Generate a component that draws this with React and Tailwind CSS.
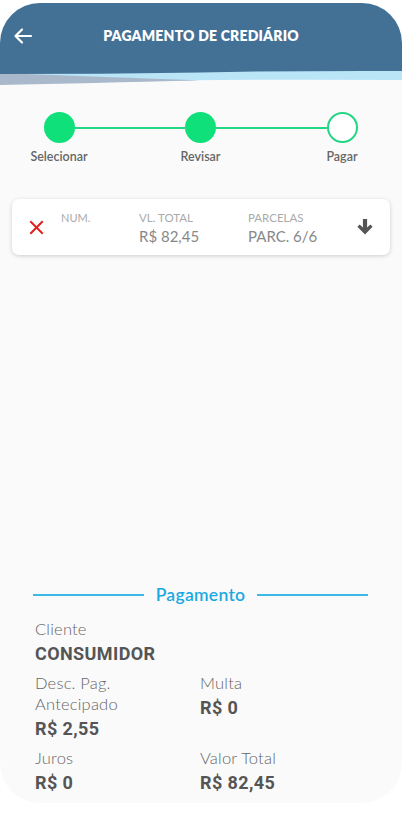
import React from 'react';

const font = { fontFamily: 'Lato, "Open Sans", sans-serif' };

const Header = () => (
  <div className="bg-[#437196]">
    <div className="flex items-start h-[61px] pt-[24px]">
      <div className="w-[50px] pl-[13px]">
        <svg width="20" height="18" viewBox="0 0 20 18" fill="none" stroke="white" strokeWidth="2.2" strokeLinecap="round" strokeLinejoin="round">
          <path d="M18 9H3" />
          <path d="M9 2.5L2.5 9L9 15.5" />
        </svg>
      </div>
      <h1 className="flex-1 text-center text-white text-[14px] leading-[18px] font-extrabold tracking-[0.2px]">
        PAGAMENTO DE CREDIÁRIO
      </h1>
      <div className="w-[50px]" />
    </div>
  </div>
);

const Wave = () => (
  <svg className="block bg-[#fafafa]" width="402" height="24" viewBox="0 0 402 24">
    <path d="M0 8 L402 6 L402 16 Q260 15 120 17 L0 18 Z" fill="#b9e5f7" />
    <path d="M0 9 L0 21 Q90 19 200 16.5 Q110 13 0 9 Z" fill="#a9b9cb" />
    <path d="M0 0 H402 V7 Q300 6.5 200 8.5 Q100 10 0 10 Z" fill="#437196" />
  </svg>
);

const Circle = ({ done }) => (
  <div
    className={
      done
        ? 'w-[31px] h-[31px] rounded-full bg-[#0fe07a] shrink-0'
        : 'w-[31px] h-[31px] rounded-full bg-white border-2 border-[#22d683] shrink-0'
    }
  />
);

const Stepper = () => (
  <div className="mt-[24px]">
    <div className="flex items-center pl-[43.5px] pr-[44.5px]">
      <Circle done />
      <div className="flex-1 h-[2px] bg-[#22d683]" />
      <Circle done />
      <div className="flex-1 h-[2px] bg-[#22d683]" />
      <Circle />
    </div>
    <div className="flex justify-between pl-[19px] pr-[20px] mt-[6px] text-[12.5px] leading-[16px] font-semibold text-[#666]">
      <span className="w-[80px] text-center">Selecionar</span>
      <span className="w-[80px] text-center">Revisar</span>
      <span className="w-[80px] text-center">Pagar</span>
    </div>
  </div>
);

const Card = () => (
  <div className="mx-[12px] mt-[34px] h-[56px] bg-white rounded-[7px] shadow-[0_1px_4px_rgba(0,0,0,0.18)] flex items-center">
    <div className="w-[49px] flex justify-center">
      <svg width="15" height="15" viewBox="0 0 15 15" stroke="#e0201f" strokeWidth="2" strokeLinecap="square">
        <path d="M2 2L13 13M13 2L2 13" />
      </svg>
    </div>
    <div className="w-[78px] self-start pt-[12px] text-[11px] leading-[14px] text-[#aaa]">NUM.</div>
    <div className="w-[109px] self-start pt-[12px]">
      <div className="text-[11.5px] leading-[14px] text-[#aaa]">VL. TOTAL</div>
      <div className="text-[15px] leading-[20px] text-[#888] mt-[1px]">R$ 82,45</div>
    </div>
    <div className="flex-1 self-start pt-[12px]">
      <div className="text-[11.5px] leading-[14px] text-[#aaa]">PARCELAS</div>
      <div className="text-[15px] leading-[20px] text-[#888] mt-[1px]">PARC. 6/6</div>
    </div>
    <div className="w-[50px] flex justify-center">
      <svg width="16" height="18" viewBox="0 0 16 18" fill="#555">
        <path d="M5.9 1H10.1V9.6L13.3 6.4L15.6 8.7L8 16.5L0.4 8.7L2.7 6.4L5.9 9.6Z" />
      </svg>
    </div>
  </div>
);

const Field = ({ label, value }) => (
  <div>
    <div className="text-[16.5px] leading-[21px] font-light text-[#666] tracking-[0.2px]">{label}</div>
    <div className="text-[18px] leading-[24px] font-bold text-[#555] mt-[2px] tracking-[0.4px]" style={{ fontFamily: 'Roboto, sans-serif' }}>
      {value}
    </div>
  </div>
);

const Pagamento = () => (
  <div className="mt-auto pb-[8px]">
    <div className="flex items-center pl-[33px] pr-[34px]">
      <div className="flex-1 h-[1.5px] bg-[#3cb8e6]" />
      <span className="px-[12px] text-[17.5px] leading-[22px] font-semibold text-[#1aa9e3] tracking-[0.3px]">Pagamento</span>
      <div className="flex-1 h-[1.5px] bg-[#3cb8e6]" />
    </div>
    <div className="pl-[35px] mt-[13px]">
      <Field label="Cliente" value="CONSUMIDOR" />
      <div className="grid grid-cols-[165px_1fr] mt-[7px] gap-y-[7px]">
        <Field label={<>Desc. Pag.<br />Antecipado</>} value="R$ 2,55" />
        <Field label="Multa" value="R$ 0" />
        <Field label="Juros" value="R$ 0" />
        <Field label="Valor Total" value="R$ 82,45" />
      </div>
    </div>
  </div>
);

export default function App() {
  return (
    <div className="w-[402px] h-[816px] bg-white pt-[3px]" style={font}>
      <div className="h-[800px] rounded-[40px] overflow-hidden bg-[#fafafa] flex flex-col">
        <Header />
        <Wave />
        <Stepper />
        <Card />
        <Pagamento />
      </div>
    </div>
  );
}
